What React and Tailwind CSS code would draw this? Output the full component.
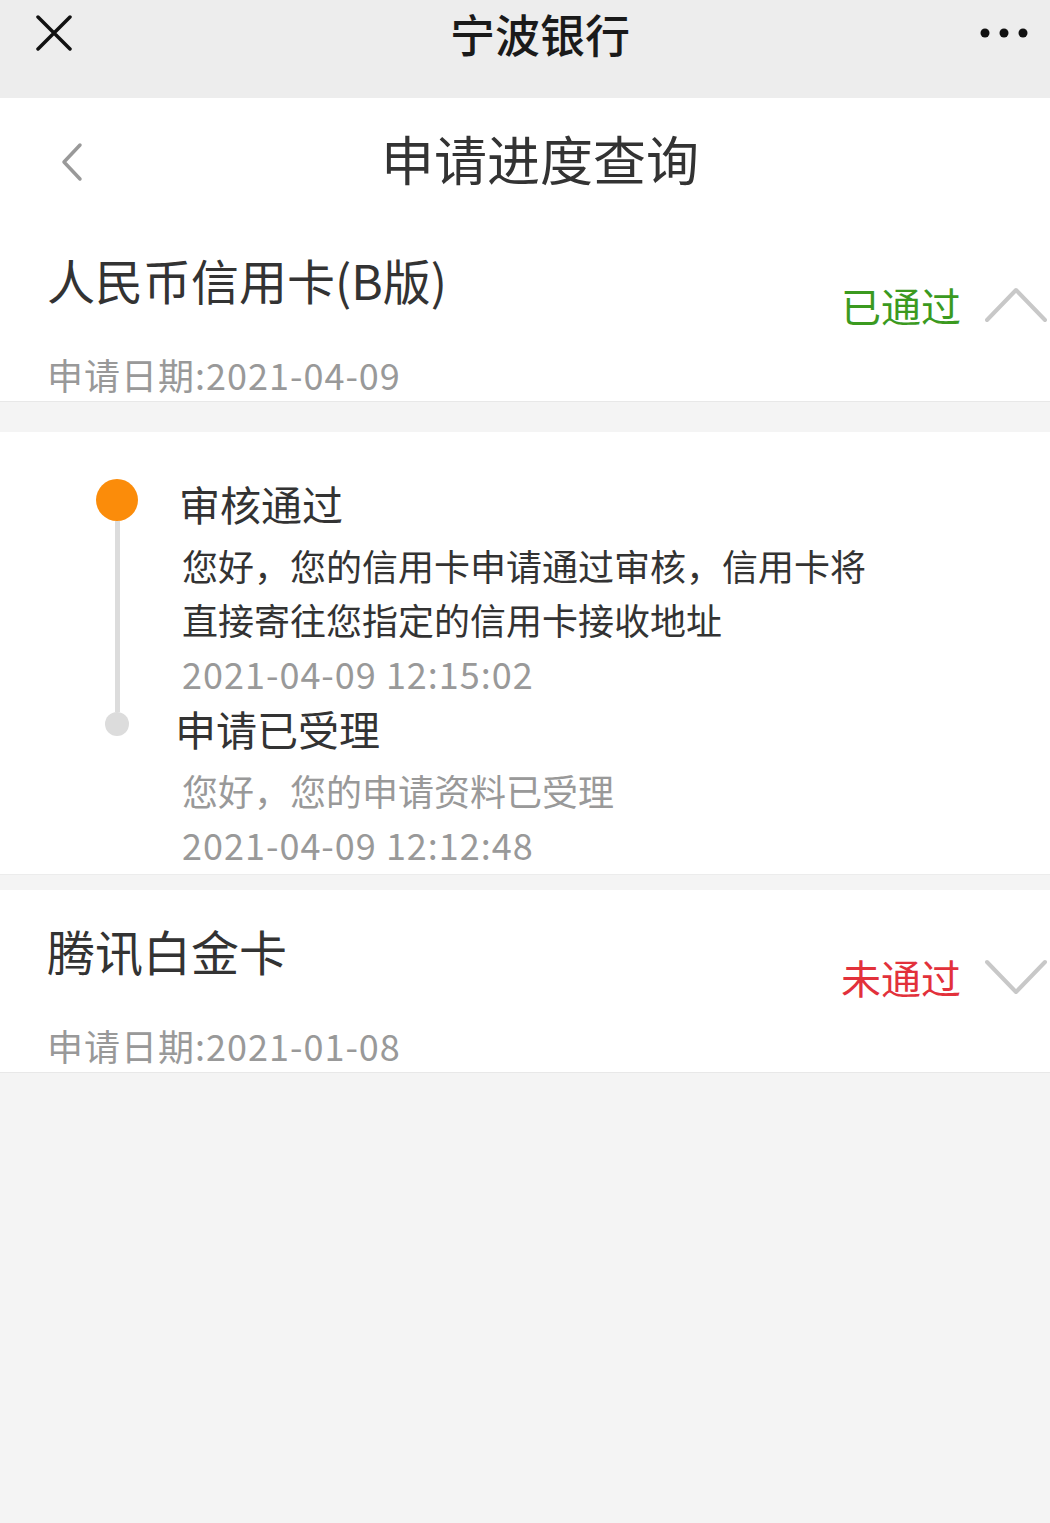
import React from 'react';

const font = { fontFamily: '"Noto Sans CJK SC", "Noto Sans", sans-serif' };

function Chevron({ up }) {
  return (
    <svg width="62" height="36" viewBox="0 0 62 36" fill="none">
      <path
        d={up ? 'M2 33 L31 3 L60 33' : 'M2 3 L31 33 L60 3'}
        stroke="#c8c8c8"
        strokeWidth="4"
        strokeLinecap="round"
        strokeLinejoin="round"
      />
    </svg>
  );
}

function CardRow({ title, status, statusColor, date, up, top, statusTop }) {
  return (
    <div className={`flex justify-between bg-white border-b border-[#e8e8e8] ${top}`}>
      <div className="pl-[47px]">
        <div className="text-[48px] leading-[56px] text-[#333]">{title}</div>
        <div className="mt-[45px] text-[36px] leading-[44px] tracking-[1px] text-[#999] pb-[5px]">{date}</div>
      </div>
      <div className={`flex items-center gap-[24px] pr-[3px] self-start ${statusTop}`}>
        <span className={`text-[40px] leading-[44px] ${statusColor}`}>{status}</span>
        <Chevron up={up} />
      </div>
    </div>
  );
}

export default function App() {
  return (
    <div className="min-h-[1523px] bg-[#f4f4f4]" style={font}>
      {/* WeChat top bar */}
      <div className="h-[98px] bg-[#ededed] flex items-start justify-between px-[36px] pt-[15px] relative">
        <svg width="36" height="36" viewBox="0 0 36 36">
          <path d="M2 2 L34 34 M34 2 L2 34" stroke="#111" strokeWidth="3.5" strokeLinecap="round" />
        </svg>
        <div className="absolute left-[30px] right-0 top-[13px] text-center text-[45px] leading-[42px] font-medium text-[#1a1a1a]">
          宁波银行
        </div>
        <svg width="52" height="36" viewBox="0 0 52 36" className="-mr-[16px]">
          <circle cx="7" cy="18" r="4.5" fill="#111" />
          <circle cx="26" cy="18" r="4.5" fill="#111" />
          <circle cx="45" cy="18" r="4.5" fill="#111" />
        </svg>
      </div>

      {/* Page header */}
      <div className="h-[128px] bg-white flex items-center relative">
        <svg width="24" height="40" viewBox="0 0 24 40" className="ml-[60px]">
          <path d="M20 3 L4 20 L20 37" stroke="#999" strokeWidth="3.5" fill="none" strokeLinecap="round" strokeLinejoin="round" />
        </svg>
        <div className="absolute left-[30px] right-0 top-[30px] text-center text-[53px] leading-[60px] text-[#333] pointer-events-none">
          申请进度查询
        </div>
      </div>

      <CardRow
        title="人民币信用卡(B版)"
        status="已通过"
        statusColor="text-[#3b9a1f]"
        date="申请日期:2021-04-09"
        up
        top="pt-[25px]"
        statusTop="mt-[32px]"
      />

      {/* Timeline */}
      <div className="mt-[30px] bg-white pt-[44px] pb-[3px] border-b border-[#ececec]">
        <div className="flex">
          <div className="w-[42px] ml-[96px] mt-[3px] flex flex-col items-center">
            <div className="w-[42px] h-[42px] rounded-full bg-[#fb8c0a]" />
            <div className="w-[5px] flex-1 bg-[#dcdcdc]" />
          </div>
          <div className="ml-[44px] pb-[1px]">
            <div className="-ml-[3px] text-[41px] leading-[54px] text-[#333]">审核通过</div>
            <div className="mt-[8px] text-[36px] leading-[54px] text-[#333]">
              您好，您的信用卡申请通过审核，信用卡将
              <br />
              直接寄往您指定的信用卡接收地址
            </div>
            <div className="text-[36px] leading-[54px] tracking-[1px] text-[#999]">2021-04-09 12:15:02</div>
          </div>
        </div>
        <div className="flex">
          <div className="w-[42px] ml-[96px] flex flex-col items-center">
            <div className="w-[5px] h-[11px] bg-[#dcdcdc]" />
            <div className="w-[24px] h-[24px] rounded-full bg-[#dcdcdc]" />
          </div>
          <div className="ml-[39px]">
            <div className="-ml-[2px] text-[41px] leading-[54px] text-[#333]">申请已受理</div>
            <div className="ml-[5px] mt-[8px] text-[36px] leading-[54px] text-[#999]">您好，您的申请资料已受理</div>
            <div className="ml-[5px] text-[36px] leading-[54px] tracking-[1px] text-[#999]">2021-04-09 12:12:48</div>
          </div>
        </div>
      </div>

      <div className="mt-[15px]">
        <CardRow
          title="腾讯白金卡"
          status="未通过"
          statusColor="text-[#e2313b]"
          date="申请日期:2021-01-08"
          top="pt-[32px]"
          statusTop="mt-[33px]"
        />
      </div>
    </div>
  );
}
